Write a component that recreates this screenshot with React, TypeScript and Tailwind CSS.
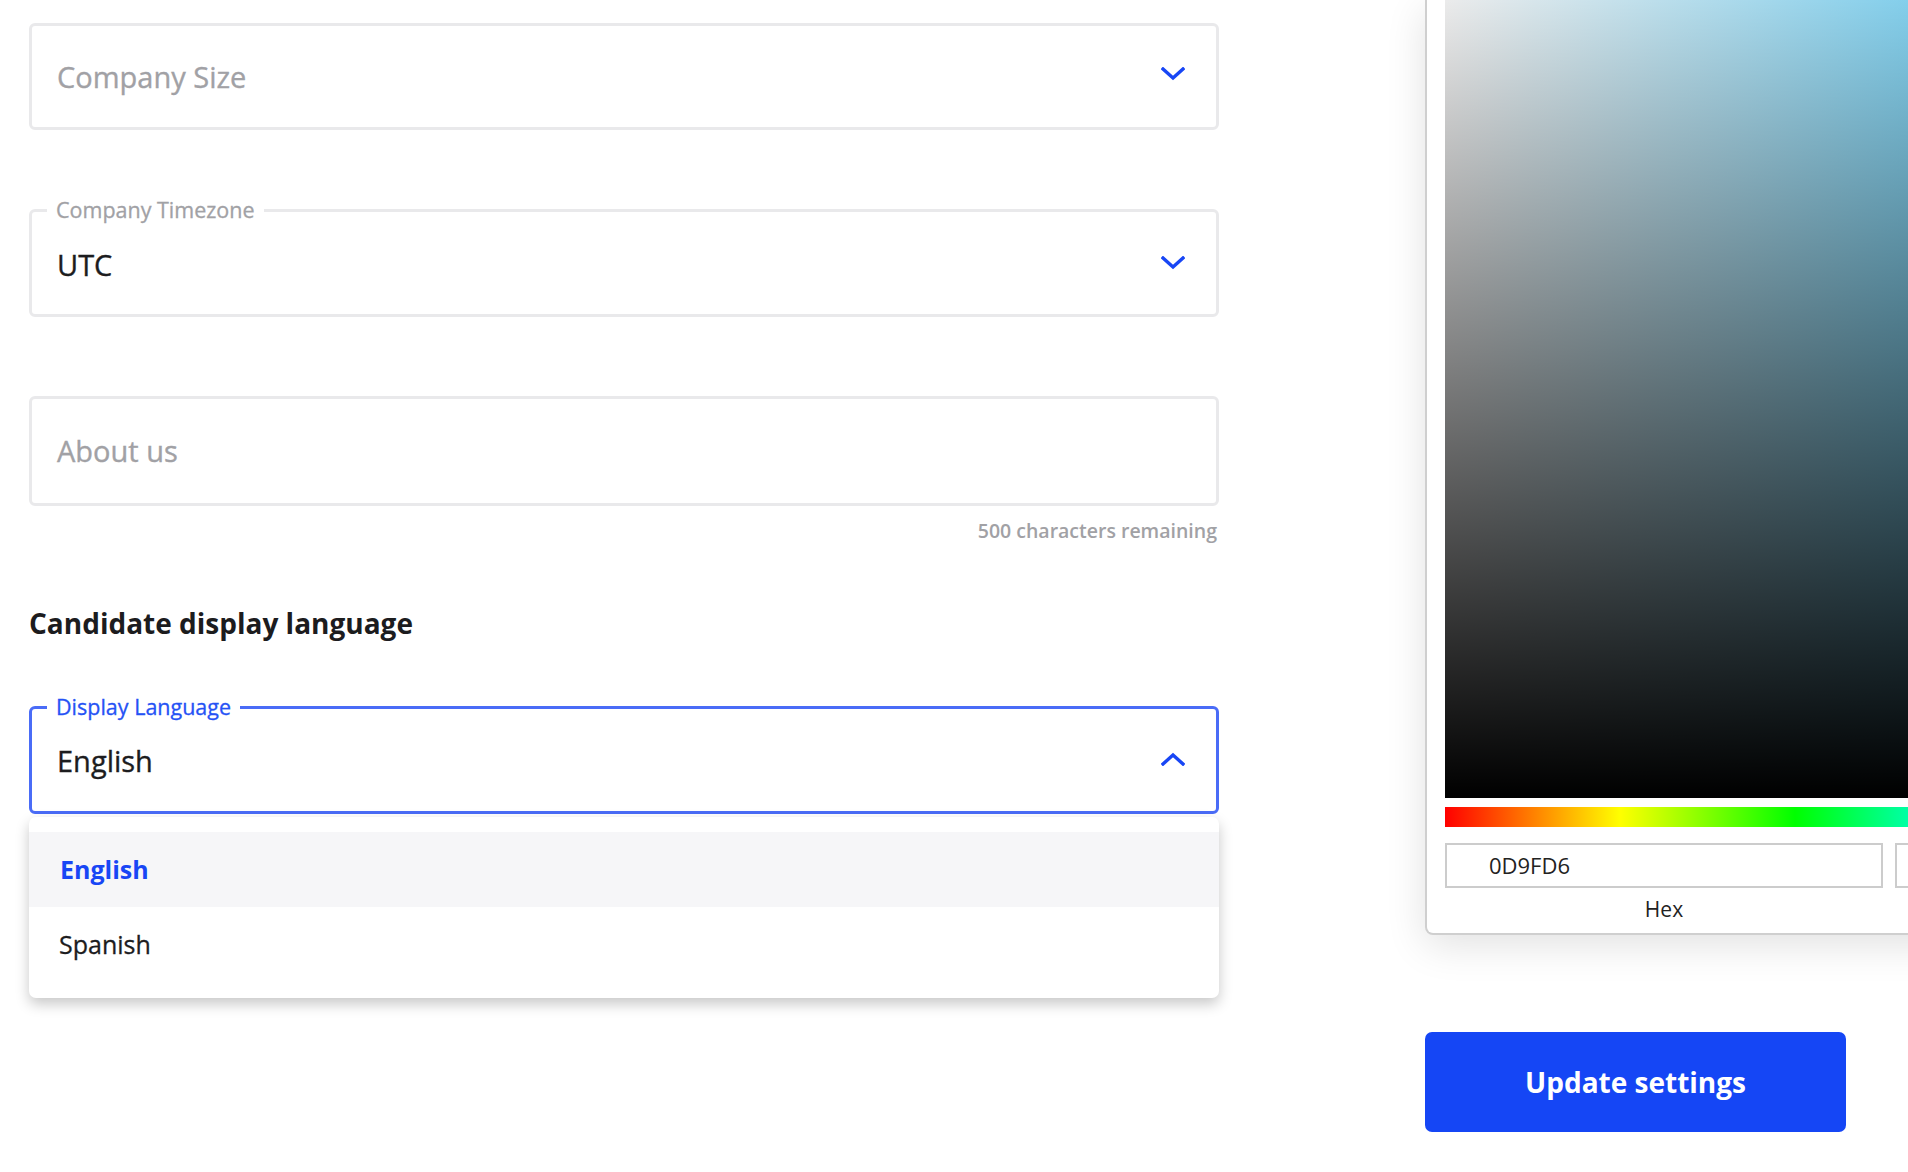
import React from "react";

function Chevron({ up = false }: { up?: boolean }) {
  return (
    <svg width="24" height="14" viewBox="0 0 24 14" fill="none" className="shrink-0">
      <polyline
        points={up ? "2,12 12,3 22,12" : "2,2 12,11 22,2"}
        stroke="#1846f5"
        strokeWidth="3.4"
        strokeLinecap="square"
        strokeLinejoin="miter"
        fill="none"
      />
    </svg>
  );
}

export default function App() {
  return (
    <div
      className="w-[1908px] h-[1172px] overflow-hidden bg-white flex"
      style={{ fontFamily: '"Open Sans", "Noto Sans", sans-serif' }}
    >
      {/* Left column */}
      <div className="ml-[29px] w-[1190px] shrink-0 flex flex-col">
        {/* Company Size */}
        <div className="mt-[23px] h-[107px] border-[3px] border-[#e9e9eb] rounded-[6px] flex items-center justify-between pl-[25px] pr-[31px]">
          <span className="text-[29px] font-medium [-webkit-text-stroke:0.35px_currentColor] text-[#a1a1a5]">Company Size</span>
          <div className="-mt-[6px]">
            <Chevron />
          </div>
        </div>

        {/* Company Timezone */}
        <fieldset className="mt-[66px] border-[3px] border-[#e9e9eb] rounded-[6px] pl-[15px] pr-[31px]">
          <legend className="px-[9px] text-[21.5px] leading-[28px] font-medium [-webkit-text-stroke:0.3px_currentColor] text-[#a1a1a5]">Company Timezone</legend>
          <div className="h-[90px] flex items-center justify-between pl-[10px] pb-[8px]">
            <span className="text-[29px] font-medium [-webkit-text-stroke:0.35px_currentColor] text-[#1c1c1e]">UTC</span>
            <div className="-mt-[4px]">
              <Chevron />
            </div>
          </div>
        </fieldset>

        {/* About us */}
        <div className="mt-[79px] h-[110px] border-[3px] border-[#e9e9eb] rounded-[6px] flex items-center pl-[25px]">
          <span className="text-[29px] font-medium [-webkit-text-stroke:0.35px_currentColor] text-[#a1a1a5]">About us</span>
        </div>
        <div className="mt-[12px] text-right text-[19.5px] leading-[26px] font-semibold text-[#a1a1a5] pr-[2px]">
          500 characters remaining
        </div>

        {/* Heading */}
        <h2 className="mt-[61px] text-[28px] leading-[36px] font-bold text-[#1c1c1e]">
          Candidate display language
        </h2>

        {/* Display Language */}
        <fieldset className="mt-[52px] border-[3px] border-[#4a6cf7] rounded-[6px] pl-[15px] pr-[31px]">
          <legend className="px-[9px] text-[21.5px] leading-[28px] font-medium [-webkit-text-stroke:0.3px_currentColor] text-[#2552f5]">Display Language</legend>
          <div className="h-[90px] flex items-center justify-between pl-[10px] pb-[10px]">
            <span className="text-[29px] font-medium [-webkit-text-stroke:0.35px_currentColor] text-[#1c1c1e]">English</span>
            <div className="-mt-[5px]">
              <Chevron up />
            </div>
          </div>
        </fieldset>

        {/* Dropdown */}
        <div className="mt-[3px] h-[181px] bg-white rounded-[7px] shadow-[0_6px_14px_rgba(0,0,0,0.22)] pt-[15px] flex flex-col">
          <div className="h-[75px] bg-[#f6f6f8] flex items-center pl-[31px]">
            <span className="text-[25px] font-bold text-[#1846f5]">English</span>
          </div>
          <div className="h-[75px] flex items-center pl-[30px]">
            <span className="text-[25px] font-medium [-webkit-text-stroke:0.3px_currentColor] text-[#1c1c1e]">Spanish</span>
          </div>
        </div>
      </div>

      {/* Right column */}
      <div className="ml-[206px] w-[1090px] shrink-0 flex flex-col">
        <div className="border-x-2 border-b-2 border-[#cfcfcf] rounded-b-[8px] bg-white shadow-[0_10px_40px_rgba(0,0,0,0.12)] px-[18px] pb-[10px]">
          <div className="h-[798px] w-full bg-[linear-gradient(to_bottom,rgba(0,0,0,0.08),#000),linear-gradient(to_right,#ffffff,#00b9ff)]" />
          <div className="mt-[9px] h-[20px] w-full bg-[linear-gradient(to_right,#f00,#ff0,#0f0,#0ff,#00f,#f0f,#f00)]" />
          <div className="mt-[16px] flex gap-[12px]">
            <div className="w-[438px] shrink-0 flex flex-col items-center">
              <div className="w-full h-[45px] border-2 border-[#cccccc] flex items-center pl-[42px] text-[22px] text-[#222]">
                0D9FD6
              </div>
              <span className="mt-[7px] text-[21px] leading-[28px] text-[#222]">Hex</span>
            </div>
            <div className="w-[190px] shrink-0 flex flex-col items-center">
              <div className="w-full h-[45px] border-2 border-[#cccccc] flex items-center justify-center text-[22px] text-[#222]">
                13
              </div>
              <span className="mt-[7px] text-[21px] leading-[28px] text-[#222]">R</span>
            </div>
          </div>
        </div>

        <button className="mt-[97px] w-[421px] h-[100px] bg-[#1546f5] rounded-[7px] text-white text-[28px] font-bold">
          Update settings
        </button>
      </div>
    </div>
  );
}
